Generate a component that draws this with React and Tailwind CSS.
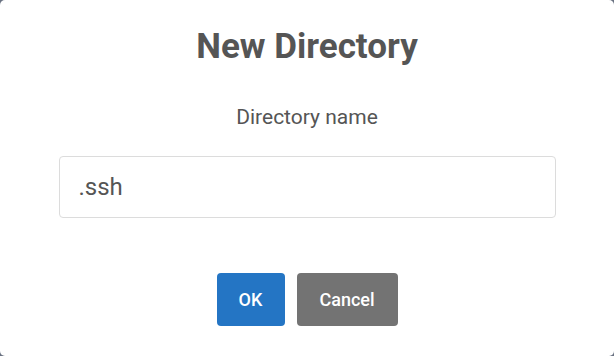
export default function App() {
  return (
    <div className="h-[356px] w-[614px] bg-gray-500" style={{ fontFamily: 'Roboto, "Liberation Sans", sans-serif' }}>
      <div className="flex h-full w-full flex-col items-center rounded-[5px] bg-white">
        <h1 className="mt-[26px] text-[35px] font-bold leading-[42px] text-[#555]">New Directory</h1>
        <p className="mt-[36px] text-[21px] leading-[26px] text-[#555]">Directory name</p>
        <div className="mt-[26px] flex h-[62px] w-[497px] items-center rounded-[4px] border border-[#dcdcdc] px-[19px]">
          <span className="text-[24px] text-[#555]">.ssh</span>
        </div>
        <div className="mt-[55px] flex gap-[12px]">
          <button className="h-[53px] w-[68px] rounded-[4px] bg-[#2475c4] text-[18px] font-medium text-white">OK</button>
          <button className="h-[53px] w-[101px] rounded-[4px] bg-[#737373] text-[18px] font-medium text-white">Cancel</button>
        </div>
      </div>
    </div>
  );
}
